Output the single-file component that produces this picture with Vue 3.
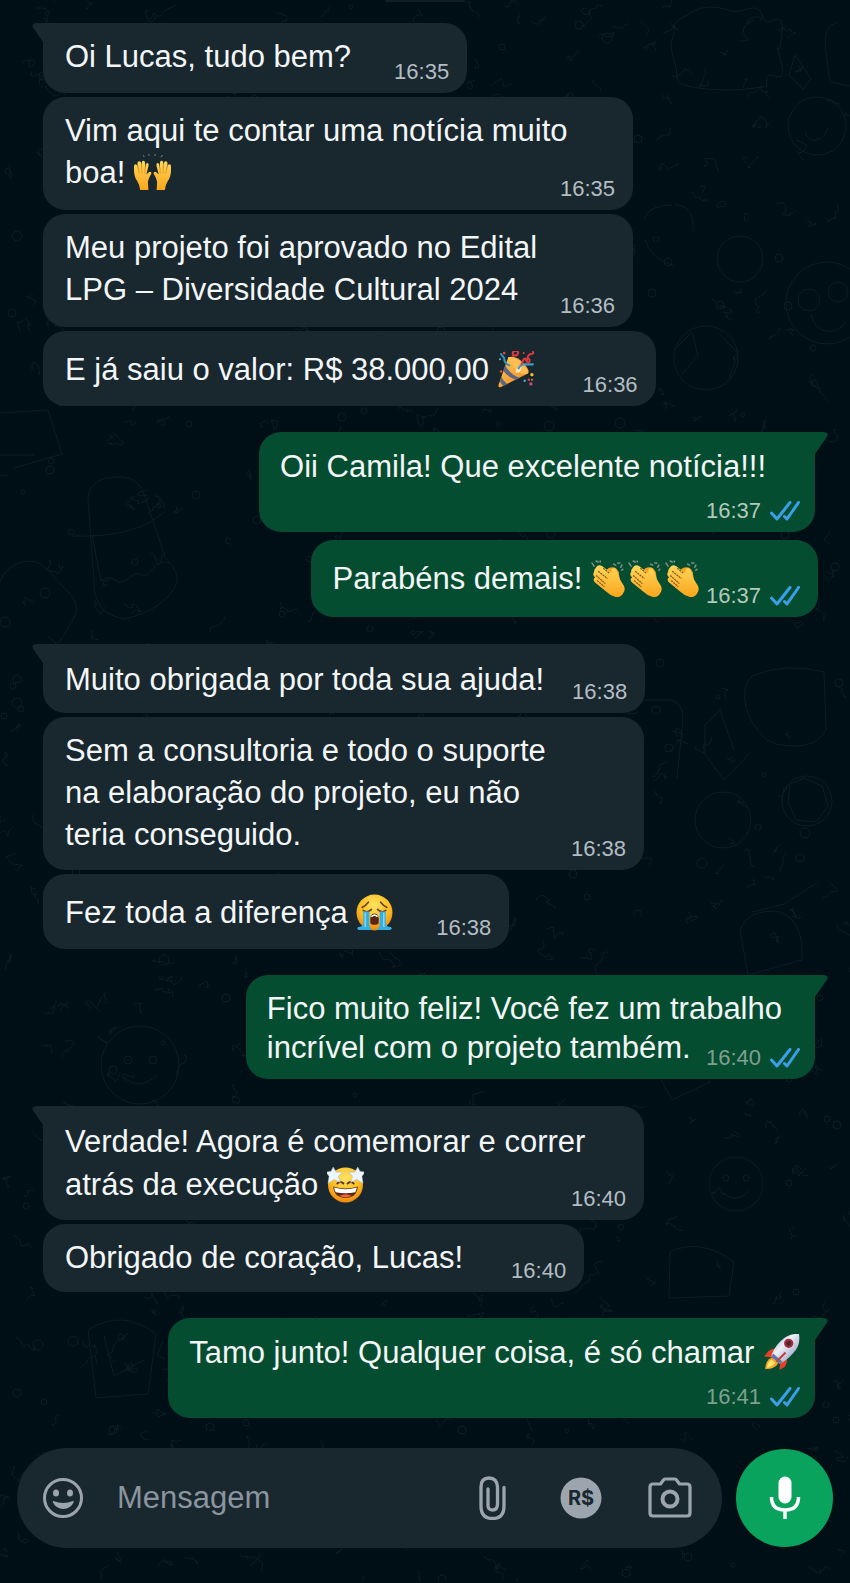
<template>
  <div class="chat">
    <!-- emoji artwork, referenced by id from the messages -->
    <svg class="defs" aria-hidden="true">
      <defs>
        <linearGradient id="skin" x1="0" y1="0" x2="0" y2="1">
          <stop offset="0" stop-color="#ffd75a" />
          <stop offset="1" stop-color="#fba51c" />
        </linearGradient>
        <linearGradient id="cone" x1="0" y1="0" x2="1" y2="1">
          <stop offset="0" stop-color="#ffd04f" />
          <stop offset="1" stop-color="#f08324" />
        </linearGradient>
        <radialGradient id="face" cx="0.5" cy="0.3" r="0.7">
          <stop offset="0" stop-color="#ffe463" />
          <stop offset="0.6" stop-color="#fdbd22" />
          <stop offset="1" stop-color="#ee8710" />
        </radialGradient>
        <linearGradient id="hull" x1="0" y1="0" x2="1" y2="1">
          <stop offset="0" stop-color="#7f93c2" />
          <stop offset="0.4" stop-color="#eef0f6" />
          <stop offset="1" stop-color="#7d86b4" />
        </linearGradient>
      </defs>
      <symbol id="hands" viewBox="0 0 36 36">
        <g stroke="#66747b" stroke-width="1" fill="none">
          <path d="M9 1l1 2M14 0l1 2M21 0l-1 2M28 1l-2 2" />
        </g>
        <g id="hand" fill="url(#skin)">
          <path d="M6 35q-1-6-3-9Q0 22 0 16v-4q0-2 1.500-2t1.800 2l.4 3-.3-6q0-2 1.700-2t1.900 2l.5 5V8.500q0-2 1.600-2t1.700 2l.1 6 .6-4q.3-2 1.600-1.700t1.100 2.400L12 20l2-2q1.500-1.500 2.700-.3.8 1-.4 2.600Q14 24 13.500 27l.5 8z" />
          <path d="M4 12l1 7M7.500 12l.2 7M10.700 13l-.3 6" fill="none" stroke="#d98a15" stroke-width="0.700" />
        </g>
        <use href="#hand" transform="translate(36 0) scale(-1 1)" />
      </symbol>
      <symbol id="party" viewBox="0 0 36 36">
        <path d="M10 6Q18 4 25 12T29 22L3 35Q0 36 .500 33z" fill="url(#cone)" />
        <path d="M7 14q6 10 14 12l-4 2Q9 25 5 19zM3 25q3 5 6 7l-4 2q-2-2-3-4z" fill="#5c6586" />
        <path d="M10 6q1 6 7 12t12 4q1-4-5-10T10 6" fill="#ffbd52" />
        <path d="M17 21q0-5 6-6-1 7-6 6" fill="#fff1d4" opacity=".85" />
        <g fill="none" stroke-width="2" stroke-linecap="round">
          <path d="M3 3l3 4q0 5 5 7" stroke="#3293bf" />
          <path d="M20 17q2-4 5-4t9 0" stroke="#3a9fcb" />
          <path d="M15 5q-2-5 2-5t2 3q0 2-3 1M23 13q1-3 2-5t3 2q1-7 4-7t2-2M30 11q2-3-1-4" stroke="#dc3940" />
        </g>
        <g>
          <circle cx="6" cy="2" r="1.300" fill="#e94040" />
          <circle cx="2" cy="8" r="1" fill="#64bbdd" />
          <circle cx="25" cy="2" r="1" fill="#e94040" />
          <circle cx="3" cy="20" r="1.200" fill="#e76036" />
          <circle cx="33" cy="23" r="1.600" fill="#f7c52d" />
          <circle cx="30" cy="28" r="1.200" fill="#e94040" />
          <circle cx="26" cy="29" r="1.200" fill="#3bb4bd" />
          <circle cx="32" cy="32" r="1.600" fill="#d84597" />
          <circle cx="33" cy="28" r="1" fill="#ef7e2c" />
        </g>
      </symbol>
      <symbol id="clap" viewBox="0 0 36 36">
        <g stroke="#82908b" stroke-width="1.500" stroke-linecap="round">
          <path d="M1 3l2 3M5 1l2 1M9 1v1M22 4l2 1M26 3h2M30 5l-1 2M31 9l-1 1" />
        </g>
        <path d="M15 11q1-4 6-4 4 0 6 5 1 5 1 9z" fill="#f4a51f" />
        <path d="M5 7q2-3 6-1l9 7q-1-5 2-5t4 5q1 5 6 12 2 4-1 8t-7 3q-5-1-9-5L4 22q-3-3 0-5-3-3-1-5 0-3 2-5z" fill="url(#skin)" />
        <path d="M7 11l9 7M5 15l9 8M6 20l7 6M12 8l6 5" fill="none" stroke="#87571b" stroke-width="1.200" stroke-dasharray="2 .7" />
      </symbol>
      <symbol id="cry" viewBox="0 0 36 36">
        <circle cx="18" cy="18" r="17.500" fill="url(#face)" />
        <path d="M6 13q3-1 6-5M30 13q-3-1-6-5M7 16q4 3 8-1M29 16q-4 3-8-1" fill="none" stroke="#704015" stroke-width="1.600" stroke-linecap="round" />
        <path d="M7 17h6v14q1 3 3 4H3q-3-1-1-3 5 0 5-3zM29 17h-6v14q-1 3-3 4h13q3-1 1-3-5 0-5-3z" fill="#35aee0" />
        <path d="M9 18v14M27 18v14" stroke="#80d7f2" stroke-width="1.500" />
        <path d="M14 28q-1-9 4-9t4 9q0 2-4 2t-4-2" fill="#5b2418" />
        <path d="M15 22q3-3 6 0" fill="none" stroke="#fff" stroke-width="1.500" />
      </symbol>
      <symbol id="star-struck" viewBox="0 0 36 36">
        <circle cx="18" cy="18.500" r="17" fill="url(#face)" />
        <path d="M10 17q3-3 6 0M20 17q3-3 6 0" fill="none" stroke="#5b3512" stroke-width="1.800" stroke-linecap="round" />
        <path d="M6 20q12 4 24 0-1 11-12 11T6 20" fill="#5a2913" />
        <path d="M7 21q11 3 22 0-.5 3-1.500 4.500-9.500 2-19 0Q7 23 7 21" fill="#fff" />
        <path d="M12 29q6-3 12 0-6 3-12 0" fill="#ef613e" />
        <path id="star" d="M6 1l3 5 6 0-4 4 2 6-6-3-6 4 1-7-3-4 5-1z" fill="#edf5ff" stroke="#a8bdcc" stroke-width="0.500" />
        <use href="#star" transform="translate(36 0) scale(-1 1)" />
      </symbol>
      <symbol id="rocket" viewBox="0 0 36 36">
        <path d="M13 14q-5 0-8 3l-4 5 10 1zM23 24q1 4-2 8l-5 3 1-9z" fill="#e64128" />
        <path d="M8 23q-5 2-6 11 7 1 12-4l1-4z" fill="#f6a52a" />
        <path d="M8 25q-4 3-4 8 5-1 8-5z" fill="#ffe56b" />
        <path d="M35 0q2 11-6 19-6 7-13 10l-8-7q2-8 9-15 8-8 18-7" fill="url(#hull)" />
        <path d="M8 22l8 7 3-2-9-8z" fill="#6077aa" />
        <circle cx="25" cy="9" r="4.500" fill="#a9303b" />
        <circle cx="25" cy="9" r="2.500" fill="#4c2734" />
        <path d="M13 27l9-9" stroke="#c34041" stroke-width="2" />
      </symbol>
    </svg>

    <svg class="wallpaper" viewBox="0 0 850 1583" preserveAspectRatio="xMidYMin slice" aria-hidden="true">
      <path v-for="(d, i) in squiggles" :key="i" :d="d" />
      <circle cx="817" cy="126" r="29" />
      <circle cx="827" cy="303" r="41" />
      <circle cx="809" cy="300" r="11" />
      <circle cx="838" cy="292" r="10" />
      <path d="M811 314q3 15 15 17t20-9M805 132q4 11 12 8t11-12" />
      <circle cx="706" cy="358" r="32" />
      <path d="M674 350l18-18 6 24-16 18M720 335l18 18-9 26" />
      <circle cx="740" cy="259" r="23" />
      <path d="M645 240q7 20 30 26M675 205q20 0 18 26M644 218q8-14 28-13" />
      <path d="M674 35q-2-12 6-16t14-8 16-4 18 3 20-1 14 6 12 5 8 14-4 14 3 14-6 14-8 10q-30 6-60 3t-30-11-4-22 1-21" />
      <path d="M838 22q-16 4-12 30l4 30 20 4M795 55l-6 20 14 14 8-10z" />
      <path d="M88 500q0-24 34-23 18 1 23 20l20 60q15 16 12 26-12 26-52 36-32-5-31-38zM72 536q64 2 92-24M92 535l9 46M101 581q8-6 14-1t14-2 12-3 12-6 16-6" />
      <path d="M0 413l48-3 14 44-48 14M0 455h35" />
      <path d="M0 582q6-16 22-20t26 8 22 24 2 28-14 22" />
      <path d="M640 700h30q14 2 13 20l-6 58" />
      <path d="M752 676q-11 10-6 32 12 32 30 36 38 8 50-14l-2-58q-40-10-72 4" />
      <circle cx="723" cy="820" r="28" />
      <circle cx="807" cy="801" r="25" />
      <path d="M790 784l14-6 18 8 6 20-12 16-20-2-8-18zM704 753l20 27 27-28M705 753v-28l15-15 14 40" />
      <path d="M740 930q8-22 40-18 24 8 22 48l-54 15zM752 912l32-8 34-22" />
      <circle cx="140" cy="1065" r="39" />
      <circle cx="128" cy="1060" r="4" />
      <circle cx="153" cy="1060" r="4" />
      <path d="M124 1077q15 15 33-2" />
      <circle cx="736" cy="1184" r="27" />
      <circle cx="746" cy="1178" r="3" />
      <circle cx="726" cy="1178" r="3" />
      <path d="M722 1192q14 13 27-1M650 1060l40-16 20 38-38 18z" />
      <path d="M88 1330q34-22 68 4l-8 60-52 4zM104 1336l10 40 30-16" />
      <path d="M670 1252q30-15 64 10l-5 34-60 2z" />
    </svg>

    <div class="earlier"></div>

    <main class="messages">
      <article
        v-for="(msg, i) in messages"
        :key="i"
        class="bubble"
        :class="[msg.side, msg.layout, msg.mods]"
      >
        <svg v-if="msg.mods.includes('tail')" class="tip" viewBox="0 0 24 24" aria-hidden="true">
          <path d="M24 0H4Q-2 1 2 6L13 22V24H24Z" />
        </svg>
        <p class="text">
          <template v-for="(part, j) in split(msg.text)" :key="j">
            <svg v-if="part.emoji" class="emoji" role="img" :aria-label="part.emoji">
              <use :href="'#' + part.emoji" />
            </svg>
            <template v-else>{{ part.text }}</template>
          </template>
        </p>
        <div class="meta">
          <time>{{ msg.time }}</time>
          <svg v-if="msg.side === 'out'" class="ticks" viewBox="0 0 30 20" aria-label="Lida">
            <path d="M1.500 12L7 18L20 1.500M14.500 15.500L17 18L28.500 1.500" />
          </svg>
        </div>
      </article>
    </main>

    <form class="composer" @submit.prevent>
      <div class="field">
        <button type="button" class="smiley" aria-label="Emoji">
          <svg width="42" height="42" viewBox="0 0 42 42">
            <circle cx="21" cy="21" r="18.500" fill="none" stroke="currentColor" stroke-width="3" />
            <ellipse cx="14" cy="16" rx="3" ry="3.500" fill="currentColor" />
            <ellipse cx="28" cy="16" rx="3" ry="3.500" fill="currentColor" />
            <path d="M11.500 24q9.500 4 19.500 0 1.500 0 .5 1.500-3 6.500-10.200 6.500T11 25.500q-.8-1.500.5-1.500" fill="currentColor" />
          </svg>
        </button>
        <input v-model="draft" type="text" placeholder="Mensagem" aria-label="Mensagem" />
        <button type="button" aria-label="Anexar">
          <svg width="44" height="44" viewBox="0 0 44 44">
            <path d="M34 11.500V30Q34 42.500 22.500 42.500T11 30V11Q11 2 19 2T27.500 11V28Q27.500 34 22.500 34T18 28V13" fill="none" stroke="currentColor" stroke-width="3.300" stroke-linecap="round" />
          </svg>
        </button>
        <button type="button" aria-label="Pagamento">
          <svg width="44" height="44" viewBox="0 0 44 44">
            <circle cx="22" cy="22" r="20.500" fill="currentColor" />
            <text x="22" y="29" class="coin">R$</text>
          </svg>
        </button>
        <button type="button" aria-label="Câmera">
          <svg width="44" height="44" viewBox="0 0 44 44" fill="none" stroke="currentColor">
            <path d="M5 8H12.500L15.500 4Q16 3 17 3H27Q28 3 28.500 4L31.500 8H39Q42 8 42 11V37Q42 40 39 40H5Q2 40 2 37V11Q2 8 5 8Z" stroke-width="3.200" stroke-linejoin="round" />
            <circle cx="22" cy="23" r="7.500" stroke-width="4" />
          </svg>
        </button>
      </div>
      <button type="button" class="mic" aria-label="Gravar áudio">
        <svg width="44" height="44" viewBox="0 0 44 44">
          <rect x="15.500" y="0.500" width="13" height="27" rx="6.500" fill="#fff" />
          <path d="M8.500 21Q8.500 34 22 34T35.500 21M22 34V43" fill="none" stroke="#fff" stroke-width="3.500" />
        </svg>
      </button>
    </form>
  </div>
</template>

<script setup>
import { ref } from 'vue'

const draft = ref('')

const messages = [
  { side: 'in', layout: 'row', mods: ['tail'], text: 'Oi Lucas, tudo bem?', time: '16:35' },
  { side: 'in', layout: 'over', mods: ['wide'], text: 'Vim aqui te contar uma notícia muito\nboa! :hands:', time: '16:35' },
  { side: 'in', layout: 'over', mods: ['wide'], text: 'Meu projeto foi aprovado no Edital\nLPG – Diversidade Cultural 2024', time: '16:36' },
  { side: 'in', layout: 'row', mods: ['tall', 'loose'], text: 'E já saiu o valor: R$ 38.000,00 :party:', time: '16:36' },
  { side: 'out', layout: 'stack', mods: ['tail'], text: 'Oii Camila! Que excelente notícia!!!', time: '16:37' },
  { side: 'out', layout: 'row', mods: ['tall', 'follow'], text: 'Parabéns demais! :clap::clap::clap:', time: '16:37' },
  { side: 'in', layout: 'row', mods: ['tail', 'near'], text: 'Muito obrigada por toda sua ajuda!', time: '16:38' },
  { side: 'in', layout: 'over', mods: ['wider'], text: 'Sem a consultoria e todo o suporte\nna elaboração do projeto, eu não\nteria conseguido.', time: '16:38' },
  { side: 'in', layout: 'row', mods: ['tall'], text: 'Fez toda a diferença :cry:', time: '16:38' },
  { side: 'out', layout: 'over', mods: ['tail', 'dense', 'dim'], text: 'Fico muito feliz! Você fez um trabalho\nincrível com o projeto também.', time: '16:40' },
  { side: 'in', layout: 'over', mods: ['tail', 'wider', 'airy'], text: 'Verdade! Agora é comemorar e correr\natrás da execução :star-struck:', time: '16:40' },
  { side: 'in', layout: 'row', mods: ['loose', 'short'], text: 'Obrigado de coração, Lucas!', time: '16:40' },
  { side: 'out', layout: 'stack', mods: ['tail', 'snug', 'dim'], text: 'Tamo junto! Qualquer coisa, é só chamar :rocket:', time: '16:41' }
]

// ":name:" marks an emoji, everything else is plain text
const split = (text) =>
  text
    .split(/(:[a-z-]+:)/)
    .filter((s) => s !== '')
    .map((s) => (/^:[a-z-]+:$/.test(s) ? { emoji: s.slice(1, -1) } : { text: s }))

// small seeded doodles for the wallpaper
let seed = 41
const rand = () => {
  seed = (seed * 16807) % 2147483647
  return seed / 2147483647
}
const near = (n) => Math.round((rand() - 0.5) * n)

const squiggles = Array.from({ length: 800 }, (_, i) => {
  const x = Math.round(rand() * 850)
  const y = Math.round(rand() * 1583)
  if (i % 4 === 0) {
    const r = 2 + Math.round(rand() * 3)
    return `M${x} ${y}a${r} ${r} 0 1 0 ${2 * r} 0a${r} ${r} 0 1 0 ${-2 * r} 0`
  }
  let d = `M${x} ${y}`
  for (let k = 0; k < 2 + (i % 3); k++) {
    d += `q${near(14)} ${near(14)} ${near(18)} ${near(18)}`
  }
  return d
})
</script>

<style>
body {
  margin: 0;
  background-color: #000f16;
}
</style>

<style scoped>
.chat {
  position: relative;
  overflow: hidden;
  padding-bottom: 33px;
  background-color: #000f16;
  color: #f3f6f7;
  font-family: "Liberation Sans", Arial, sans-serif;
  font-size: 31px;
  line-height: 42px;
}

.defs {
  position: absolute;
  width: 0;
  height: 0;
}

.wallpaper {
  position: absolute;
  inset: 0;
  width: 100%;
  height: 100%;
  fill: none;
  stroke: #0e1d23;
  stroke-width: 1;
}

.earlier {
  position: relative;
  width: 80px;
  height: 2px;
  margin-left: 385px;
  border-radius: 0 0 8px 8px;
  background-color: #111e25;
}

.messages {
  position: relative;
  display: flex;
  flex-direction: column;
  align-items: flex-start;
  gap: 4px;
  padding-top: 21px;
}

.bubble {
  position: relative;
  box-sizing: border-box;
  max-width: 94%;
  padding: 13px 18px 8px 22px;
  border-radius: 22px;
}

.in {
  margin-left: 43px;
  background-color: #19272e;
}

.out {
  align-self: flex-end;
  margin-right: 35px;
  padding: 14px 15px 8px 21px;
  background-color: #054d30;
}

.in + .out {
  margin-top: 22px;
}

.out + .in {
  margin-top: 23px;
}

.out + .out {
  margin-top: 4px;
}

.in.tail {
  border-top-left-radius: 0;
}

.out.tail {
  border-top-right-radius: 0;
}

.tip {
  position: absolute;
  top: 0;
  left: -11px;
  width: 24px;
  height: 24px;
  fill: #19272e;
}

.out .tip {
  left: auto;
  right: -13px;
  fill: #054d30;
  transform: scaleX(-1);
}

.text {
  margin: 0;
  padding-bottom: 7px;
  white-space: pre-wrap;
}

.emoji {
  width: 37px;
  height: 37px;
  vertical-align: -8px;
}

.meta {
  display: flex;
  align-items: center;
  justify-content: flex-end;
  gap: 9px;
  color: #b4bdc4;
  font-size: 22px;
  line-height: 26px;
}

.out .meta {
  color: #b3c9be;
}

.dim .meta {
  color: #7f9f8f;
}

.ticks {
  width: 30px;
  height: 20px;
  fill: none;
  stroke: #399fe8;
  stroke-width: 3;
  stroke-linecap: round;
  stroke-linejoin: round;
}

/* time beside the text */
.row {
  display: flex;
  align-items: flex-end;
  gap: 43px;
}

.loose {
  gap: 48px;
}

.near {
  gap: 28px;
  padding-top: 15px;
}

.near .text {
  padding-bottom: 4px;
}

.short .text {
  padding-bottom: 5px;
}

.tall {
  padding-top: 18px;
}

.follow {
  gap: 4px;
  margin-right: 32px;
  padding-right: 18px;
}

.follow .text {
  padding-bottom: 9px;
}

/* time under the text */
.stack .text {
  padding: 0 34px 10px 0;
}

.snug .text {
  padding-right: 0;
}

/* time in the corner of the text block */
.over {
  display: grid;
}

.over .text,
.over .meta {
  grid-area: 1 / 1;
}

.over .meta {
  align-self: end;
  justify-self: end;
}

.wide {
  min-width: 590px;
}

.wide .text {
  padding-bottom: 8px;
}

.wider {
  min-width: 601px;
}

.wider .text {
  padding-bottom: 6px;
}

.airy {
  padding-top: 14px;
  line-height: 43px;
}

.dense {
  line-height: 39px;
}

.dense .text {
  padding: 0 18px 4px 0;
}

.composer {
  position: relative;
  display: flex;
  align-items: center;
  gap: 14px;
  margin-top: 30px;
  padding: 0 17px;
}

.field {
  display: flex;
  flex: 1;
  align-items: center;
  gap: 45px;
  min-width: 0;
  height: 100px;
  box-sizing: border-box;
  padding: 0 30px 0 25px;
  border-radius: 50px;
  background-color: #19272e;
}

button {
  display: flex;
  flex: none;
  padding: 0;
  border: none;
  background: none;
  color: #9ca5ae;
  cursor: pointer;
}

.smiley {
  margin-right: -12px;
}

input {
  flex: 1;
  min-width: 0;
  padding: 0;
  border: none;
  outline: none;
  background: none;
  color: #f3f6f7;
  font: inherit;
}

input::placeholder {
  color: #8a959f;
  opacity: 1;
}

.coin {
  fill: #19272e;
  font-family: Inter, "Liberation Sans", sans-serif;
  font-size: 20px;
  font-weight: 700;
  text-anchor: middle;
}

.mic {
  align-items: center;
  justify-content: center;
  width: 97px;
  height: 98px;
  border-radius: 50%;
  background-color: #0aa35e;
}
</style>
